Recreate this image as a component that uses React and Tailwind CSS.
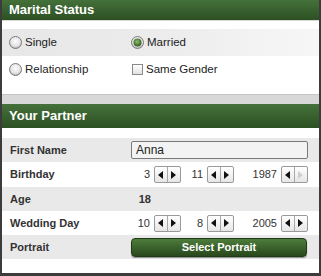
import React from "react";

const Radio = ({ checked }) => (
  <svg width="13" height="13" viewBox="0 0 13 13">
    <defs>
      <radialGradient id="rg" cx="50%" cy="40%" r="60%">
        <stop offset="0%" stopColor="#fdfdfd" />
        <stop offset="70%" stopColor="#e2e2e2" />
        <stop offset="100%" stopColor="#a8a8a8" />
      </radialGradient>
      <radialGradient id="gg" cx="45%" cy="40%" r="60%">
        <stop offset="0%" stopColor="#8fc16f" />
        <stop offset="100%" stopColor="#2f5a1e" />
      </radialGradient>
    </defs>
    <circle cx="6.5" cy="6.5" r="6" fill="url(#rg)" stroke="#7d7d7d" strokeWidth="1" />
    {checked && <circle cx="6.5" cy="6.5" r="4" fill="url(#gg)" />}
  </svg>
);

const Arrow = ({ dir, disabled }) => (
  <svg width="5" height="8" viewBox="0 0 5 8">
    <polygon
      points={dir === "left" ? "5,0 5,8 0,4" : "0,0 0,8 5,4"}
      fill={disabled ? "#cfcfcf" : "#111"}
    />
  </svg>
);

const Stepper = ({ disabledRight }) => (
  <div className="flex h-[17px] w-[27px] rounded-[2px] border border-[#9a9a9a] bg-gradient-to-b from-white to-[#e6e6e6]">
    <div className="flex w-1/2 items-center justify-center border-r border-[#a8a8a8]">
      <Arrow dir="left" />
    </div>
    <div className="flex w-1/2 items-center justify-center">
      <Arrow dir="right" disabled={disabledRight} />
    </div>
  </div>
);

const Num = ({ value, width, disabledRight }) => (
  <div className={`flex items-center justify-end gap-1 ${width}`}>
    <span className="text-[11px] text-[#333]">{value}</span>
    <Stepper disabledRight={disabledRight} />
  </div>
);

const Header = ({ title, height }) => (
  <div
    className={`flex items-center bg-gradient-to-b from-[#44713a] to-[#2d5023] pl-[7px] text-[13px] font-bold text-white ${height}`}
  >
    {title}
  </div>
);

const Row = ({ label, gray, h = "h-6", children }) => (
  <div
    className={`grid grid-cols-[121px_177px] items-center pl-2 ${h} ${gray ? "bg-[#e9e9e9]" : "bg-white"}`}
  >
    <span className="text-[11px] font-bold text-[#333]">{label}</span>
    <div className="flex items-center">{children}</div>
  </div>
);

export default function App() {
  return (
    <div className="flex h-[276px] w-[321px] flex-col border-x-2 border-b-[3px] border-[#3c3c3c] bg-white font-['Liberation_Sans',Arial,sans-serif]">
      <Header title="Marital Status" height="h-[20px]" />
      <div className="border-t border-[#d8d8d8] bg-white pt-[8px] pb-[11px]">
        <div className="grid h-[27px] grid-cols-[122px_1fr] items-center bg-gradient-to-r from-[#e7e7e7] via-[#ececec] to-[#f7f7f7] pl-[7px] text-[11.5px] text-[#222]">
          <div className="flex items-center gap-[3px]">
            <Radio />
            <span>Single</span>
          </div>
          <div className="flex items-center gap-[3px]">
            <Radio checked />
            <span>Married</span>
          </div>
        </div>
        <div className="grid h-[27px] grid-cols-[122px_1fr] items-center pl-[7px] text-[11.5px] text-[#222]">
          <div className="flex items-center gap-[3px]">
            <Radio />
            <span>Relationship</span>
          </div>
          <div className="flex items-center gap-[3px]">
            <div className="ml-[1px] h-[11px] w-[11px] border border-[#8a8a8a] bg-gradient-to-b from-white to-[#e2e2e2]" />
            <span>Same Gender</span>
          </div>
        </div>
      </div>
      <div className="h-[10px] border-t border-[#c6c6c6] bg-[#d8d8d8]" />
      <Header title="Your Partner" height="h-[24px]" />
      <div className="flex-1 bg-white pt-[10px]">
        <Row label="First Name" gray>
          <div className="flex h-[18px] w-[177px] items-center rounded-[2px] border border-[#7a7a7a] bg-[#f3f3f3] pl-1 text-[12px] text-[#222]">
            Anna
          </div>
        </Row>
        <Row label="Birthday" h="h-[25px]">
          <Num value="3" width="w-[50px]" />
          <Num value="11" width="w-[53px]" />
          <Num value="1987" width="w-[74px]" disabledRight />
        </Row>
        <Row label="Age" gray>
          <span className="w-[20px] text-right text-[11px] font-bold text-[#333]">18</span>
        </Row>
        <Row label="Wedding Day">
          <Num value="10" width="w-[50px]" />
          <Num value="8" width="w-[53px]" />
          <Num value="2005" width="w-[74px]" />
        </Row>
        <Row label="Portrait" gray>
          <button className="h-[19px] w-[176px] rounded-[4px] border border-[#1f3a17] bg-gradient-to-b from-[#4d7d3c] to-[#29481d] text-[11px] font-bold text-white shadow-[0_1px_1px_rgba(0,0,0,0.4)]">
            Select Portrait
          </button>
        </Row>
      </div>
    </div>
  );
}
